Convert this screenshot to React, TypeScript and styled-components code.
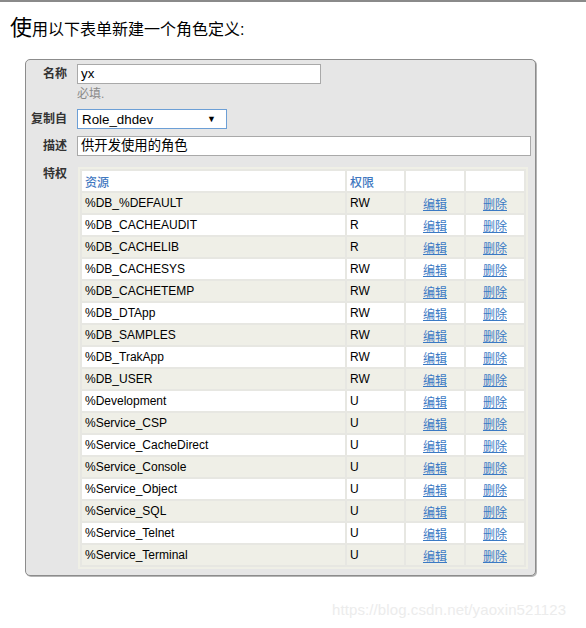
import React from "react";
import styled, { createGlobalStyle } from "styled-components";

const Global = createGlobalStyle`
  html, body { margin: 0; padding: 0; background: #fff; }
  body { font-family: "Liberation Sans", Arial, "Noto Sans CJK SC", sans-serif; color: #000; }
`;

const Page = styled.div`
  position: relative;
  min-height: 628px;
  border-top: 2px solid #8a8a8a;
  box-sizing: border-box;
`;

const Heading = styled.div`
  margin: 14px 0 0 10px;
  height: 24px;
  line-height: 24px;
  font-size: 16px;
  color: #000;
`;

const BigChar = styled.span`
  font-size: 22px;
`;

const Box = styled.div`
  margin: 19px 0 0 25px;
  width: 511px;
  box-sizing: border-box;
  background: #e6e6e6;
  border: 1px solid #8c8c8c;
  border-radius: 5px;
  box-shadow: 1px 1px 0 #b5b5b5;
  padding: 4px 4px 6px 4px;
  display: flex;
  flex-direction: column;
`;

const Row = styled.div<{ $top: number }>`
  display: flex;
  align-items: flex-start;
  gap: 10px;
  margin-top: ${(p) => p.$top}px;
`;

const Label = styled.div<{ $lh: number }>`
  width: 37px;
  flex: none;
  text-align: right;
  font-size: 12px;
  font-weight: bold;
  color: #333;
  line-height: ${(p) => p.$lh}px;
  white-space: nowrap;
`;

const Field = styled.div`
  display: flex;
  flex-direction: column;
  flex: 1;
`;

const TextInput = styled.div<{ $w?: number }>`
  width: ${(p) => (p.$w ? `${p.$w}px` : "100%")};
  height: 20px;
  box-sizing: border-box;
  background: #fff;
  border: 1px solid #a9a9a9;
  font-size: 13.33px;
  line-height: 18px;
  padding: 0 3px;
  color: #000;
  font-family: "Liberation Sans", Arial, "Noto Sans CJK SC", sans-serif;
`;

const Hint = styled.div`
  font-size: 12px;
  line-height: 14px;
  margin-top: 3px;
  color: #8a8a8a;
`;

const SelectBox = styled.div`
  width: 150px;
  height: 20px;
  box-sizing: border-box;
  background: #fff;
  border: 1px solid #6c9fd6;
  display: flex;
  align-items: center;
  justify-content: space-between;
  padding: 0 10px 0 4px;
  font-size: 13.33px;
`;

const Arrow = styled.span`
  font-size: 9px;
  color: #000;
`;

const TableWrap = styled.div`
  margin-left: 1px;
  width: 450px;
  box-sizing: border-box;
  background: #e7e7e2;
  border: 2px solid #efefe6;
`;

const Table = styled.table`
  width: 100%;
  table-layout: fixed;
  border-collapse: separate;
  border-spacing: 2px;
  font-size: 12px;
`;

const Th = styled.th<{ $w: number }>`
  width: ${(p) => p.$w}px;
  height: 20px;
  background: #fff;
  color: #3f78bf;
  font-weight: 500;
  text-align: left;
  padding: 0 3px;
  font-size: 12px;
`;

const Tr = styled.tr<{ $alt: boolean }>`
  background: ${(p) => (p.$alt ? "#efefe7" : "#fff")};
`;

const Td = styled.td<{ $center?: boolean }>`
  height: 20px;
  padding: 0 3px;
  text-align: ${(p) => (p.$center ? "center" : "left")};
  color: #000;
  white-space: nowrap;
  overflow: hidden;
`;

const Link = styled.a`
  color: #3b7ac4;
  text-decoration: underline;
  cursor: pointer;
`;

const Watermark = styled.div`
  position: absolute;
  left: 332px;
  top: 599px;
  font-size: 15px;
  color: #ececec;
  letter-spacing: 0.1px;
`;

const rows: [string, string][] = [
  ["%DB_%DEFAULT", "RW"],
  ["%DB_CACHEAUDIT", "R"],
  ["%DB_CACHELIB", "R"],
  ["%DB_CACHESYS", "RW"],
  ["%DB_CACHETEMP", "RW"],
  ["%DB_DTApp", "RW"],
  ["%DB_SAMPLES", "RW"],
  ["%DB_TrakApp", "RW"],
  ["%DB_USER", "RW"],
  ["%Development", "U"],
  ["%Service_CSP", "U"],
  ["%Service_CacheDirect", "U"],
  ["%Service_Console", "U"],
  ["%Service_Object", "U"],
  ["%Service_SQL", "U"],
  ["%Service_Telnet", "U"],
  ["%Service_Terminal", "U"],
];

export default function App() {
  return (
    <Page>
      <Global />
      <Heading>
        <BigChar>使</BigChar>用以下表单新建一个角色定义:
      </Heading>
      <Box>
        <Row $top={0}>
          <Label $lh={20}>名称</Label>
          <Field>
            <TextInput $w={244}>yx</TextInput>
            <Hint>必填.</Hint>
          </Field>
        </Row>
        <Row $top={8}>
          <Label $lh={20}>复制自</Label>
          <SelectBox>
            <span>Role_dhdev</span>
            <Arrow>▼</Arrow>
          </SelectBox>
        </Row>
        <Row $top={7}>
          <Label $lh={20}>描述</Label>
          <Field>
            <TextInput>供开发使用的角色</TextInput>
          </Field>
        </Row>
        <Row $top={11}>
          <Label $lh={14}>特权</Label>
          <TableWrap>
            <Table>
              <thead>
                <tr>
                  <Th $w={257}>资源</Th>
                  <Th $w={51}>权限</Th>
                  <Th $w={52}></Th>
                  <Th $w={52}></Th>
                </tr>
              </thead>
              <tbody>
                {rows.map(([name, perm], i) => (
                  <Tr key={name} $alt={i % 2 === 0}>
                    <Td>{name}</Td>
                    <Td>{perm}</Td>
                    <Td $center>
                      <Link>编辑</Link>
                    </Td>
                    <Td $center>
                      <Link>删除</Link>
                    </Td>
                  </Tr>
                ))}
              </tbody>
            </Table>
          </TableWrap>
        </Row>
      </Box>
      <Watermark>https://blog.csdn.net/yaoxin521123</Watermark>
    </Page>
  );
}
